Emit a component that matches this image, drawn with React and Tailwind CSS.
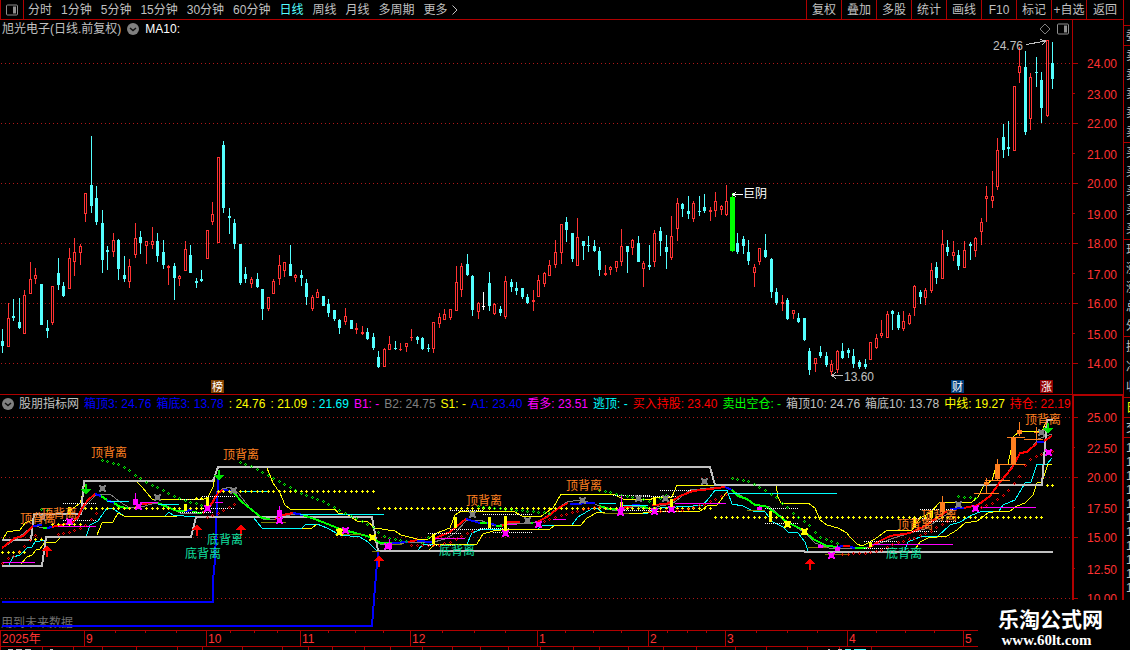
import React from "react";

const PERIODS = ["分时", "1分钟", "5分钟", "15分钟", "30分钟", "60分钟", "日线", "周线", "月线", "多周期", "更多"];
const TOOLS = ["复权", "叠加", "多股", "统计", "画线", "F10", "标记", "+自选", "返回"];

const LEGEND = [
  ["箱顶3: 24.76", "text-[#0000ff]"],
  ["箱底3: 13.78", "text-[#0000ff]"],
  [": 24.76", "text-[#ffff00]"],
  [": 21.09", "text-[#ffff00]"],
  [": 21.69", "text-[#00ffff]"],
  ["B1: -", "text-[#ff00ff]"],
  ["B2: 24.75", "text-[#808080]"],
  ["S1: -", "text-[#ffff00]"],
  ["A1: 23.40", "text-[#0000ff]"],
  ["看多: 23.51", "text-[#ff00ff]"],
  ["逃顶: -", "text-[#00ffff]"],
  ["买入持股: 23.40", "text-[#ff0000]"],
  ["卖出空仓: -", "text-[#00ff00]"],
  ["箱顶10: 24.76", "text-[#c0c0c0]"],
  ["箱底10: 13.78", "text-[#c0c0c0]"],
  ["中线: 19.27", "text-[#ffff00]"],
  ["持仓: 22.19", "text-[#ff0000]"],
];

const LINE = "#b00000";
const STEP = 5.527;
const barX = (i) => Math.round(2.3 + STEP * i);

// type, high, low, body top, body bottom (r = up, c = down, w = flat, g = big drop)
const CANDLES = `c329,353,341,346 r303,347,318,347 c299,321,316,318 c298,329,322,328 r290,334,295,334 r262,294,279,294
r268,284,275,279 c284,325,284,325 c320,338,328,331 r286,325,286,323 c258,290,273,285 c282,297,286,296 r248,289,258,289
r238,276,252,262 r244,265,246,253 r193,222,193,214 c136,213,185,206 c186,225,198,222 c210,273,223,260 c246,270,250,252
r233,257,240,252 c239,280,240,269 c256,282,275,279 r259,288,266,282 r223,258,238,255 c231,254,237,243 r241,264,241,246
r227,249,241,245 c233,262,241,256 c240,269,252,265 r265,285,266,268 c263,300,266,278 r275,286,276,279 r241,271,249,271
c245,273,255,273 c278,288,281,283 c270,282,279,281 r230,259,230,259 r202,225,214,222 r157,243,157,243 c141,213,145,208
c208,234,216,218 c219,249,223,244 c244,285,244,283 c267,283,274,279 r277,288,279,284 c273,288,279,287 c289,320,289,309
r297,311,297,309 r279,294,281,294 r255,285,265,279 r262,277,262,271 c245,276,264,276 r274,282,275,278 c270,286,275,278
c279,305,283,297 r295,311,297,309 r289,298,292,298 c296,306,296,306 c299,317,304,313 c310,321,310,319 c319,334,320,328
r308,325,316,322 c320,329,320,329 r323,334,328,330 r326,335,332,334 c328,340,332,339 c333,350,337,348 c351,368,357,367
r348,367,349,367 r336,350,344,350 c341,350,348,349 r343,351,349,350 r343,352,343,347 r329,341,337,338 c336,344,337,340
c337,350,338,349 c344,352,348,349 r322,353,322,349 r313,328,317,324 r309,320,314,320 r309,320,309,318 r266,311,282,311
r263,297,266,290 c254,276,264,275 c275,316,276,310 r302,319,303,312 w292,310,306,307 c272,311,283,306 r303,315,304,314
c306,316,309,313 r276,319,281,317 c279,292,282,287 c282,295,288,291 c288,299,288,297 c294,304,297,303 r290,311,300,302
r275,297,280,297 r272,287,273,284 r260,276,265,276 r240,268,252,265 r224,264,224,253 c217,242,222,230 c233,262,233,259
r218,266,237,266 c241,260,241,246 c236,252,245,246 c240,252,246,251 c247,276,251,270 r265,276,273,275 r266,275,267,270
r261,272,261,268 r229,266,246,262 c246,273,246,252 r239,255,240,248 c236,262,243,262 r261,287,263,269 c245,270,265,267
r230,267,233,262 c227,256,231,241 c235,269,247,252 r216,260,236,258 r198,241,203,229 c203,217,204,209 c196,219,211,214
r201,222,203,219 c196,216,211,212 c194,213,207,211 r207,221,210,212 r192,217,201,211 r205,215,206,210 r185,216,201,215
g193,252,197,251 c233,254,243,252 c236,254,239,246 c240,265,252,261 r264,287,267,273 r248,265,248,262 c234,258,250,257
c258,298,259,292 c288,305,292,303 r295,311,302,304 c298,320,300,319 r310,319,310,314 c313,323,318,322 c318,341,318,340
c348,375,351,370 r358,372,358,364 c346,358,352,356 c352,367,356,365 r360,375,364,372 r350,373,351,370 c343,359,351,358
c348,358,350,353 c349,368,356,364 c360,369,362,367 c359,369,364,367 r342,360,342,360 r334,349,338,348 r320,338,333,336
r311,338,314,338 c310,330,311,314 c312,330,315,328 r311,331,321,329 r313,325,315,324 r285,316,286,308 c290,304,292,297
r288,305,290,298 r263,293,270,291 c262,284,267,278 r230,279,244,279 c240,256,247,252 r241,261,252,256 c250,270,255,266
r241,268,250,268 c242,260,244,246 r237,257,238,251 r218,245,222,232 r186,222,196,199 r171,208,196,201 r138,190,150,187
c124,158,137,150 c121,156,147,149 r86,151,86,151 r47,83,66,73 c51,135,67,132 r73,130,77,119 c57,87,72,73 c72,123,80,108
r40,117,40,116 c42,89,63,79`
  .split(/\s+/)
  .map((s) => [s[0], ...s.slice(1).split(",").map(Number)]);

const CANDLE_COLORS = { r: "#ff3232", c: "#54ffff", w: "#ffffff", g: "#00ff00" };

function Candle({ i, data }) {
  const [type, high, low, top, bottom] = data;
  const x = barX(i);
  const color = CANDLE_COLORS[type];
  const h = Math.max(bottom - top, 1);
  const half = type === "g" ? 2 : 1;
  return (
    <g fill={color}>
      <rect x={x} y={high} width={1} height={low - high} />
      <rect x={x - half} y={top} width={half * 2 + 1} height={h} />
      {type === "r" && h > 2 && <rect x={x} y={top + 1} width={1} height={h - 2} fill="#000" />}
    </g>
  );
}

function GridLines({ rows }) {
  return rows.map((y) => (
    <line key={y} x1={1} x2={1072} y1={y + 0.5} y2={y + 0.5} stroke="#b01818" strokeDasharray="1 3" />
  ));
}

function ToggleIcon() {
  return (
    <svg className="h-3 w-3 shrink-0" viewBox="0 0 12 12" aria-hidden="true">
      <rect x="0.5" y="1" width="11" height="10" rx="1" fill="none" stroke="#909090" />
      <rect x="7" y="2.5" width="3" height="7" fill="#909090" />
    </svg>
  );
}

function DropButton({ label }) {
  return (
    <button type="button" aria-label={label} className="h-3 w-3 shrink-0">
      <svg className="h-3 w-3" viewBox="0 0 12 12">
        <circle cx="6" cy="6" r="6" fill="#808080" />
        <path d="M3 5l3 2.5L9 5" fill="none" stroke="#101010" strokeWidth="1.5" />
      </svg>
    </button>
  );
}

function Toolbar() {
  return (
    <nav className="flex h-5 items-stretch justify-between border-b border-[#b00000] text-[#c0c0c0]">
      <div className="flex items-center">
        <button
          type="button"
          aria-label="侧栏"
          className="mr-1 flex w-6 items-center justify-center self-stretch border-x border-[#b00000]"
        >
          <ToggleIcon />
        </button>
        <div className="flex items-center gap-[9px]">
          {PERIODS.map((p) => (
            <button key={p} type="button" className={p === "日线" ? "text-[#54ffff]" : ""}>
              {p}
            </button>
          ))}
        </div>
        <svg className="ml-1 h-2.5 w-1.5" viewBox="0 0 6 10" aria-hidden="true">
          <path d="M0.5 0.5L5 5L0.5 9.5" fill="none" stroke="#c0c0c0" />
        </svg>
      </div>
      <div className="flex">
        {TOOLS.map((t) => (
          <button
            key={t}
            type="button"
            className="w-[35px] whitespace-nowrap border-l border-[#b00000] text-center last:w-[37px]"
          >
            {t}
          </button>
        ))}
      </div>
    </nav>
  );
}

function Badge({ x, text, fill }) {
  return (
    <g>
      <rect x={x} y={380} width={13} height={13} fill={fill} />
      <text x={x + 1} y={391} fontSize={11} fill="#fff">
        {text}
      </text>
    </g>
  );
}

function PriceChart() {
  return (
    <svg
      className="block h-[356px] w-full"
      viewBox="0 38 1072 356"
      preserveAspectRatio="xMaxYMin meet"
      shapeRendering="crispEdges"
      fontSize={12}
    >
      <GridLines rows={[63, 123, 183, 243, 303, 363]} />
      {CANDLES.map((c, i) => (
        <Candle key={i} i={i} data={c} />
      ))}
      <text x={993} y={50} fill="#c0c0c0">24.76</text>
      <path d="M1026 44.5L1046 41M1040 39.5L1046 41L1042 45" fill="none" stroke="#c0c0c0" />
      <path d="M733 194.5H743M736 192L733 194.5L736 197" fill="none" stroke="#fff" />
      <text x={743} y={198} fill="#fff">巨阴</text>
      <path d="M832 375.5H843M836 372L832 375.5L836 379" fill="none" stroke="#c0c0c0" />
      <text x={844} y={381} fill="#c0c0c0">13.60</text>
      <Badge x={211} text="榜" fill="#804000" />
      <Badge x={951} text="财" fill="#003c78" />
      <Badge x={1040} text="涨" fill="#900000" />
    </svg>
  );
}

// box edges, bands and trend lines
const LINES = [
  ["#ffff00", 1, "2,541 7,532 20,530 25,523 32,520 35,515 67,513 75,507 80,503 83,493 85,482"],
  ["#ffff00", 1, "136,481 142,487 152,499 182,499 202,500 208,497 213,487 217,468"],
  ["#ffff00", 1, "267,468 273,483 280,493 285,505 290,509 335,509 338,513 348,515 357,521 368,522 375,528 395,531 401,535 417,539 428,539 437,533 450,528 455,515 461,511 513,511 522,516 540,517 553,508 561,494 613,494 623,499 650,500 655,497 672,497 677,485 776,485 778,497 781,503 808,503 815,508 820,520 827,525 838,528 847,533 850,537 857,544 862,546 868,543 878,537 887,530 912,530 920,518 930,513 940,502 972,502 978,497 983,487 992,480 997,464 1008,464 1011,450 1013,437 1020,431 1042,431 1047,420"],
  ["#00ffff", 1, "9,565 13,557 20,555 27,548 32,547 35,542 45,540 46,537"],
  ["#00ffff", 1, "86,537 90,525 98,521 107,508 112,508 124,516 165,516 169,512 173,515 195,517"],
  ["#00ffff", 1, "253,517 262,528 302,528 306,524 317,524 327,528 340,535 360,537 368,542 377,551"],
  ["#00ffff", 1, "418,550 423,544 467,544 472,533 482,529 538,529 543,525 572,525 578,517 593,508 598,509 603,513 648,513 653,509 660,508 693,506 703,505 710,497 715,490 727,490 732,504 743,506 753,511 765,512 773,522 783,527 788,532 798,533 805,542 808,551"],
  ["#00ffff", 1, "905,550 908,542 920,537 938,536 950,525 960,522 972,515 980,512 999,511 1003,505 1015,500 1025,483 1031,482 1037,464 1047,464 1052,458"],
  ["#ffff00", 1, "21,564 27,557 32,555 36,550 40,549 45,542 55,543 60,538 67,537"],
  ["#ffff00", 1, "97,535 102,523 113,522 118,513 124,516 165,516 177,516"],
  ["#ffff00", 1, "302,528 312,528 317,524"],
  ["#ffff00", 1, "429,550 435,544 477,544 483,534 493,531 510,529 550,529 555,525 581,525 587,518 598,512 605,513 643,513 660,511 700,511 707,506 717,505 727,492"],
  ["#ffff00", 1, "916,548 920,542 928,538 947,536 957,530 965,523 977,521 988,513 999,511 1010,511 1017,506 1025,503 1033,495 1037,483 1042,482 1045,473 1048,464 1052,464"],
  ["#0000ff", 2, "2,602 213,602 213,580 215,560 218,478"],
  ["#0000ff", 2, "2,626 372,626 374,600 376,575 378,552"],
  ["#808080", 1, "2,548 15,540 33,526 45,528 60,526 78,519 85,506 96,495 110,494 120,502 130,508 145,506 155,503 167,506 180,513 200,513 208,509 216,495 222,489 231,487 238,493 250,508 263,519 275,519 290,515 303,514 320,521 345,531 370,537 380,544 398,544 410,542 430,543 445,539 455,533 467,520 480,520 495,526 510,523 530,523 540,521 555,510 567,502 580,500 595,504 605,509 620,511 635,506 650,509 660,506 672,504 690,490 710,488 727,487 740,495 755,505 770,507 785,520 805,533 815,543 832,549 850,548 866,548 880,543 900,536 925,529 938,520 955,509 975,506 990,496 1005,477 1020,453 1030,450 1038,439 1052,434"],
  ["#c0c0c0", 2, "2,540 31,540 34,514 81,514 84,481 213,481 218,467 710,467 715,485 1042,485 1047,420 1053,420"],
  ["#c0c0c0", 2, "2,566 42,566 46,537 191,537 196,517 372,517 378,551 804,551 805,552 1053,552"],
  ["#ff0000", 2, "2,548 15,538 23,536 33,526"],
  ["#0000ff", 2, "33,526 42,525"],
  ["#00ff00", 2, "43,528 47,528"],
  ["#0000ff", 2, "47,528 52,527"],
  ["#ff0000", 2, "52,527 60,525 72,523 78,517 82,508 88,500 95,494"],
  ["#0000ff", 2, "95,494 101,496"],
  ["#00ff00", 2, "101,496 107,500"],
  ["#0000ff", 2, "107,500 114,503"],
  ["#00ff00", 2, "114,503 120,507 128,508"],
  ["#ff0000", 2, "135,507 142,504 152,503"],
  ["#00ff00", 2, "158,503 167,507 177,511 185,511"],
  ["#0000ff", 2, "185,511 192,510"],
  ["#00ff00", 2, "192,512 202,513"],
  ["#ff0000", 2, "203,513 208,509 214,500 218,493 223,490"],
  ["#0000ff", 2, "223,490 233,491"],
  ["#00ff00", 2, "234,493 242,502 252,510 262,518 270,519"],
  ["#ff0000", 2, "275,519 283,515 293,513"],
  ["#0000ff", 2, "293,513 303,515"],
  ["#00ff00", 2, "303,515 320,521 340,529 363,535 373,538 380,543 392,543"],
  ["#0000ff", 2, "392,543 408,542"],
  ["#ff0000", 2, "408,542 417,540"],
  ["#0000ff", 2, "417,541 432,542"],
  ["#ff0000", 2, "432,541 438,537 450,532 457,526 466,519"],
  ["#0000ff", 2, "466,519 480,523"],
  ["#00ff00", 2, "480,523 487,523"],
  ["#0000ff", 2, "487,523 496,525"],
  ["#00ff00", 2, "496,526 502,526"],
  ["#ff0000", 2, "502,526 508,522 520,522"],
  ["#00ff00", 2, "527,522 533,523"],
  ["#ff0000", 2, "537,522 547,517 560,507 568,503"],
  ["#0000ff", 2, "570,504 595,503"],
  ["#00ff00", 2, "599,506 610,509 620,510"],
  ["#ff0000", 2, "622,508 632,506"],
  ["#0000ff", 2, "632,505 640,505"],
  ["#00ff00", 2, "640,506 648,508"],
  ["#ff0000", 2, "652,505 667,504 680,496 693,491 710,489 725,487"],
  ["#0000ff", 2, "725,487 732,490"],
  ["#00ff00", 2, "732,490 738,496 747,499 755,505 765,506 773,511 787,522 803,530 813,539 827,546 838,547"],
  ["#0000ff", 2, "838,547 843,546"],
  ["#ff0000", 2, "843,546 850,546"],
  ["#0000ff", 2, "850,547 855,548"],
  ["#00ff00", 2, "855,548 866,548"],
  ["#ff0000", 2, "868,548 880,541 890,536 910,533 923,527 937,518 947,511"],
  ["#0000ff", 2, "950,509 964,508"],
  ["#ff0000", 2, "964,508 978,505 990,496 1000,482 1012,468 1020,453 1027,452 1037,443"],
  ["#0000ff", 2, "1037,442 1044,442"],
  ["#ff0000", 2, "1044,441 1052,436"],
];

// colour, y, x from, x to
const LEVELS = [
  ["#ff00ff", 562, 2, 35], ["#ff00ff", 526, 58, 96], ["#ff00ff", 502, 140, 158], ["#ff00ff", 502, 215, 223],
  ["#ff00ff", 538, 435, 465], ["#ff00ff", 524, 507, 517], ["#ff00ff", 519, 553, 566], ["#ff00ff", 503, 675, 726],
  ["#ff00ff", 544, 872, 953], ["#ff00ff", 507, 980, 1036],
  ["#00ffff", 501, 107, 129], ["#00ffff", 504, 158, 179], ["#00ffff", 491, 242, 267], ["#00ffff", 514, 300, 384],
  ["#00ffff", 503, 599, 616], ["#00ffff", 505, 622, 648], ["#00ffff", 493, 728, 837],
  ["#808000", 522, 261, 286], ["#808000", 534, 335, 362], ["#808000", 544, 390, 402], ["#808000", 551, 372, 380],
  ["#808000", 513, 603, 629], ["#808000", 510, 747, 765], ["#808000", 547, 808, 827], ["#808000", 554, 825, 850],
  ["#ff8020", 437, 1007, 1025], ["#ff8020", 439, 1024, 1043], ["#ff8020", 464, 998, 1025],
  ["#ff8020", 480, 985, 1010], ["#ff8020", 493, 974, 999],
];

const WHITE_DOTS = [
  [503, 63, 97], [520, 63, 97], [496, 202, 235], [508, 201, 235], [499, 180, 202], [512, 180, 213],
  [533, 428, 462], [545, 428, 455], [510, 450, 483], [529, 450, 483], [514, 483, 533], [528, 480, 510], [532, 493, 533],
  [495, 613, 650], [510, 622, 653], [496, 643, 677], [511, 655, 680], [490, 660, 692], [508, 765, 799], [523, 765, 799],
  [541, 864, 898], [548, 864, 898], [509, 920, 953], [521, 927, 957], [518, 912, 930], [531, 912, 937],
];

const MID_DOTS = [
  [552, 2, 24], [539, 34, 45], [524, 50, 82], [508, 84, 206], [498, 196, 206], [491, 217, 374],
  [508, 378, 712], [517, 714, 1043], [485, 1046, 1053],
];

const TRAILS = [
  ["#00ff00", [[42, 509], [50, 511]]],
  ["#00ff00", [[102, 460], [119, 464], [130, 471], [141, 479], [163, 490], [180, 499], [202, 505]]],
  ["#00ff00", [[240, 462], [252, 466], [268, 475], [290, 487], [306, 495], [322, 501], [340, 510], [362, 521], [373, 527], [380, 534], [390, 538], [407, 541]]],
  ["#00ff00", [[423, 542], [429, 536], [435, 536]]],
  ["#00ff00", [[477, 506], [497, 508], [530, 511], [553, 513]]],
  ["#00ff00", [[598, 490], [623, 495], [650, 501]]],
  ["#00ff00", [[660, 498], [666, 495]]],
  ["#00ff00", [[732, 478], [748, 481], [760, 487], [777, 498], [793, 513], [807, 523], [820, 537], [839, 544]]],
  ["#00ff00", [[958, 496], [977, 498]]],
  ["#ff0000", [[2, 563], [8, 558], [14, 555], [24, 546], [35, 535]]],
  ["#ff0000", [[58, 534], [70, 532], [86, 525], [98, 511]]],
  ["#ff0000", [[207, 517], [218, 513], [236, 503]]],
  ["#ff0000", [[411, 545], [437, 545], [450, 542], [461, 536], [475, 530]]],
  ["#ff0000", [[538, 523], [550, 519], [562, 515], [572, 512], [588, 508], [598, 507]]],
  ["#ff0000", [[648, 511], [683, 510], [703, 504], [717, 498], [727, 493]]],
  ["#ff0000", [[840, 554], [865, 553], [880, 550], [895, 543], [913, 538], [930, 531], [947, 521]]],
  ["#ff0000", [[980, 507], [992, 503], [1003, 495], [1017, 480], [1028, 460], [1042, 453], [1052, 451]]],
];

// one mark per bar along a trail
function sampleTrail(points) {
  const out = [];
  const last = points[points.length - 1];
  for (let i = 0; barX(i) <= last[0] + 1; i++) {
    const x = barX(i);
    const k = points.findIndex((p, n) => n > 0 && x <= p[0] + 1);
    if (x < points[0][0] - 1 || k < 1) continue;
    const [x0, y0] = points[k - 1];
    const [x1, y1] = points[k];
    out.push([x, Math.round(y0 + ((y1 - y0) * (x - x0)) / (x1 - x0))]);
  }
  return out;
}

// x, top, bottom
const YELLOW_BARS = [
  [69, 507, 515], [185, 504, 511], [207, 497, 507], [339, 528, 535], [371, 535, 540], [433, 534, 544], [455, 517, 528],
  [489, 517, 528], [505, 516, 531], [621, 502, 509], [654, 497, 505], [671, 499, 508], [770, 511, 522], [787, 521, 527],
  [804, 529, 535], [870, 542, 547], [914, 518, 528], [931, 511, 518],
];

// x, high, low, body top, body bottom
const ORANGE_BARS = [
  [1019, 422, 436, 430, 434], [1013, 437, 464, 437, 464], [997, 459, 480, 464, 479], [986, 478, 493, 482, 485],
  [942, 496, 516, 502, 512], [1036, 427, 440, 432, 433],
];

const STARS = [
  ["#808080", 102, 488], ["#808080", 157, 497], ["#808080", 233, 490], ["#808080", 42, 517], ["#808080", 472, 514],
  ["#808080", 527, 520], ["#808080", 582, 500], ["#808080", 638, 498], ["#808080", 665, 498], ["#808080", 704, 481],
  ["#808080", 958, 504], ["#808080", 1041, 432],
  ["#ff00ff", 69, 521], ["#ff00ff", 138, 506], ["#ff00ff", 207, 508], ["#ff00ff", 279, 520], ["#ff00ff", 345, 530],
  ["#ff00ff", 387, 546], ["#ff00ff", 505, 533], ["#ff00ff", 538, 524], ["#ff00ff", 620, 512], ["#ff00ff", 654, 511],
  ["#ff00ff", 671, 509], ["#ff00ff", 831, 555], ["#ff00ff", 975, 508], ["#ff00ff", 1048, 452],
  ["#ffff00", 339, 532], ["#ffff00", 372, 537], ["#ffff00", 787, 524], ["#ffff00", 804, 531],
];

const MAGENTA_BARS = [
  [135, 493, 499, 505], [279, 506, 510, 517], [389, 539, 543, 549], [621, 495, 507, 510], [759, 506, 507, 510],
  [820, 544, 545, 548], [837, 545, 547, 551],
];

const TOP_MARKS = [[91, 457], [223, 459], [20, 523], [41, 518], [466, 505], [566, 490], [1025, 424], [897, 529], [921, 520]];
const BOTTOM_MARKS = [[207, 544], [185, 558], [439, 555], [886, 558]];

function IndicatorChart() {
  return (
    <svg
      className="block h-[218px] w-full"
      viewBox="0 412 1072 218"
      preserveAspectRatio="xMaxYMin meet"
      shapeRendering="crispEdges"
      fontSize={12}
    >
      <GridLines rows={[417, 477, 537, 598]} />
      <text x={1} y={627} fill="#707070">用到未来数据</text>
      {LINES.map(([color, width, points], i) => (
        <polyline key={i} points={points} fill="none" stroke={color} strokeWidth={width} />
      ))}
      {LEVELS.map(([color, y, x1, x2], i) => (
        <rect key={i} x={x1} y={y} width={x2 - x1} height={1} fill={color} />
      ))}
      {WHITE_DOTS.map(([y, x1, x2], i) => (
        <line key={i} x1={x1} x2={x2} y1={y + 0.5} y2={y + 0.5} stroke="#fff" strokeDasharray="1 1" />
      ))}
      {MID_DOTS.map(([y, x1, x2]) =>
        sampleTrail([[x1, y], [x2, y]]).map(([x]) => (
          <path key={`${x}-${y}`} d={`M${x - 1} ${y + 0.5}h3M${x + 0.5} ${y - 1}v3`} stroke="#ffff00" />
        ))
      )}
      {TRAILS.map(([color, points], n) =>
        sampleTrail(points).map(([x, y]) => (
          <g key={`${n}-${x}`} fill={color}>
            <rect x={x - 1} y={y} width={1} height={1} />
            <rect x={x + 1} y={y} width={1} height={1} />
            <rect x={x} y={y - 1} width={1} height={1} />
            <rect x={x} y={y + 1} width={1} height={1} />
          </g>
        ))
      )}
      {YELLOW_BARS.map(([x, top, bottom]) => (
        <rect key={x} x={x - 1} y={top} width={3} height={bottom - top} fill="#ffff00" />
      ))}
      {ORANGE_BARS.map(([x, high, low, top, bottom]) => (
        <g key={x} fill="#ff8020">
          <rect x={x} y={high} width={1} height={low - high} />
          <rect x={x - 2} y={top} width={5} height={bottom - top} />
        </g>
      ))}
      {MAGENTA_BARS.map(([x, high, top, bottom]) => (
        <g key={x} fill="#ff00ff">
          <rect x={x} y={high} width={1} height={bottom - high} />
          <rect x={x - 2} y={top} width={5} height={bottom - top} />
        </g>
      ))}
      {STARS.map(([color, x, y], i) => (
        <path key={i} d={`M${x - 3} ${y - 3}h2v1h3v-1h2v2h-1v3h1v2h-2v-1h-3v1h-2v-2h1v-3h-1z`} fill={color} />
      ))}
      {[[86, 492], [219, 478], [1048, 431]].map(([x, y]) => (
        <path key={x} d={`M${x - 1} ${y - 8}h2v5h4l-5 6l-5-6h4z`} fill="#00e000" />
      ))}
      {[[47, 546], [197, 525], [241, 525], [379, 556], [810, 559]].map(([x, y]) => (
        <path key={x} d={`M${x - 1} ${y + 11}h2v-6h4l-5-6l-5 6h4z`} fill="#ff0000" />
      ))}
      {TOP_MARKS.map(([x, y]) => (
        <text key={x} x={x} y={y} fill="#ff8020">顶背离</text>
      ))}
      {BOTTOM_MARKS.map(([x, y]) => (
        <text key={x} x={x} y={y} fill="#10e0a0">底背离</text>
      ))}
    </svg>
  );
}

const PRICE_LABELS = [
  [24, 63], [23, 93], [22, 123], [21, 153], [20, 183], [19, 213], [18, 243], [17, 273], [16, 303], [15, 333], [14, 363],
];
const INDICATOR_LABELS = [[25, 417], [22.5, 447], [20, 477], [17.5, 507], [15, 537], [12.5, 568], [10, 598]];

function Scale({ labels, viewBox, className }) {
  return (
    <svg className={className} viewBox={viewBox} shapeRendering="crispEdges" fontSize={12}>
      {labels.map(([value, y], n) => (
        <g key={value} fill="#ff3232">
          <rect x={1073} y={y} width={n % 2 ? 2 : 5} height={1} fill={LINE} />
          <text x={1087} y={n % 2 ? y + 6 : y + 5}>
            {value.toFixed(2)}
          </text>
        </g>
      ))}
    </svg>
  );
}

const MONTHS = [[84, "9"], [206, "10"], [300, "11"], [410, "12"], [537, "1"], [648, "2"], [725, "3"], [847, "4"], [963, "5"]];
const TICKS = [115, 145, 176, 230, 254, 277, 328, 355, 383, 442, 474, 505, 565, 593, 621, 667, 687, 706, 756, 787, 817, 876, 905, 934];
const SUB_TICKS = [0, 42, 73, 102, 136, 177, 202, 242, 282, 308, 332, 364, 390, 422, 452, 480, 508, 540, 573, 599, 628, 663, 696, 735, 766, 807, 839, 871];

function DateAxis() {
  return (
    <svg
      className="block h-5 w-full"
      viewBox="0 630 1072 20"
      preserveAspectRatio="xMaxYMin meet"
      shapeRendering="crispEdges"
      fontSize={12}
    >
      <g fill={LINE}>
        <rect x={0} y={630} width={1072} height={1} />
        <rect x={0} y={646} width={1072} height={1} />
        <rect x={0} y={630} width={1} height={16} />
        {MONTHS.map(([x]) => (
          <rect key={x} x={x} y={630} width={1} height={16} />
        ))}
        {TICKS.map((x) => (
          <rect key={x} x={x} y={631} width={1} height={2} />
        ))}
        {SUB_TICKS.map((x) => (
          <rect key={x} x={x} y={647} width={1} height={3} />
        ))}
      </g>
      <g fill="#ff3232">
        <text x={2} y={643}>2025年</text>
        {MONTHS.map(([x, label]) => (
          <text key={x} x={x + 2} y={643}>
            {label}
          </text>
        ))}
      </g>
      <path d="M8 649.5h5m3 0h6m3 0h6m19 0h3M828 649.5h2m8 0h4" stroke="#c0c0c0" />
      <path d="M845 649.5h6m3 0h12" stroke="#54ffff" />
    </svg>
  );
}

function QuoteGroup({ items, className }) {
  return (
    <ul className={"flex flex-col justify-around border-b border-[#b00000] pl-0.5 " + className}>
      {items.map((t, i) => (
        <li key={i} className="whitespace-nowrap leading-4">
          {t}
        </li>
      ))}
    </ul>
  );
}

function QuoteStrip() {
  return (
    <aside className="flex h-[600px] w-[7px] shrink-0 flex-col overflow-hidden border-l border-[#b00000] text-[#c0c0c0]">
      <div className="h-[26px] border-b border-[#b00000]" />
      <QuoteGroup className="h-5" items={["委"]} />
      <QuoteGroup className="h-[97px]" items={["卖", "卖", "卖", "卖", "卖"]} />
      <QuoteGroup className="h-[97px]" items={["买", "买", "买", "买", "买"]} />
      <QuoteGroup className="h-[97px]" items={["现", "涨", "涨", "总", "外"]} />
      <QuoteGroup className="h-[61px]" items={["换", "净", "收"]} />
      <QuoteGroup className="h-5 text-[#ffff00]" items={["日"]} />
      <QuoteGroup className="h-5" items={["交"]} />
      <ul className="flex flex-col pt-0.5">
        {Array.from({ length: 11 }, (_, i) => (
          <li key={i} className="h-[14px] pl-0.5 leading-4">
            1
          </li>
        ))}
      </ul>
    </aside>
  );
}

export default function App() {
  return (
    <div className="relative flex min-h-screen items-start overflow-hidden bg-black font-['Liberation_Sans','Noto_Sans_CJK_SC',sans-serif] text-[12px] leading-4">
      <div className="min-w-0 flex-1">
        <Toolbar />
        <section className="flex">
          <div className="min-w-0 flex-1">
            <header className="flex h-[18px] items-center gap-1.5 pl-0.5 pr-[3px] text-[#c0c0c0]">
              <h1>旭光电子(日线.前复权)</h1>
              <DropButton label="主图指标" />
              <span className="text-white">MA10:</span>
              <svg className="ml-auto h-3 w-3" viewBox="0 0 12 12" aria-hidden="true">
                <path d="M6 1L11 6L6 11L1 6Z" fill="none" stroke="#808080" />
              </svg>
              <ToggleIcon />
            </header>
            <PriceChart />
          </div>
          <div className="w-[51px] shrink-0 border-l border-[#b00000]">
            <Scale className="mt-[18px] block h-[356px] w-[50px]" labels={PRICE_LABELS} viewBox="1073 38 50 356" />
          </div>
        </section>
        <section className="flex border-t border-[#b00000]">
          <div className="min-w-0 flex-1">
            <header className="flex h-[17px] items-center gap-[5px] overflow-hidden whitespace-nowrap pl-0.5">
              <DropButton label="副图指标" />
              <h2 className="text-[#c0c0c0]">股朋指标网</h2>
              {LEGEND.map(([text, color]) => (
                <span key={text} className={color}>
                  {text}
                </span>
              ))}
            </header>
            <IndicatorChart />
            <DateAxis />
          </div>
          <div className="w-[51px] shrink-0 border-l-2 border-r border-t border-[#b00000]">
            <Scale className="mt-4 block h-[218px] w-12" labels={INDICATOR_LABELS} viewBox="1074 412 48 218" />
          </div>
        </section>
      </div>
      <QuoteStrip />
      <footer className="absolute right-0 top-[600px] flex h-[50px] w-[152px] flex-col items-center bg-black pr-[7px] pt-2 text-white">
        <strong className="text-[21px] leading-6">乐淘公式网</strong>
        <a href="#" className="mr-2 font-['Liberation_Serif',serif] text-[15px] font-bold leading-4">
          www.60lt.com
        </a>
      </footer>
    </div>
  );
}
